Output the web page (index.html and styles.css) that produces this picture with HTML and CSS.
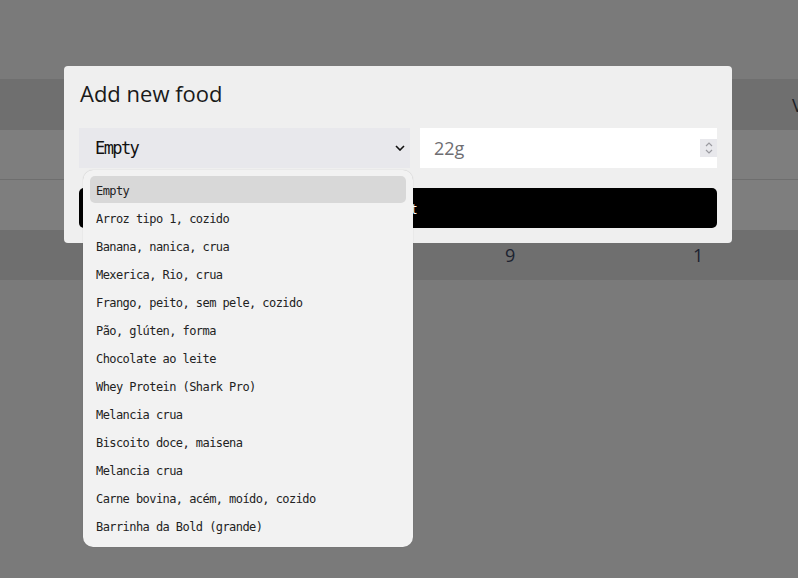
FILE: index.html
```html
<!DOCTYPE html>
<html>
<head>
<meta charset="utf-8">
<link rel="stylesheet" href="styles.css">
</head>
<body>
<div class="page">
  <div class="top"></div>
  <div class="row head"><span class="cell-v">V</span></div>
  <div class="row light line"></div>
  <div class="row light"></div>
  <div class="row dark"><span class="n9">9</span><span class="n1">1</span></div>
</div>

<div class="modal">
  <h2 class="title">Add new food</h2>
  <div class="fields">
    <div class="select">
      <span class="sel-text">Empty</span>
      <svg class="chev" width="10" height="6" viewBox="0 0 10 6"><path d="M1 1 L5 5 L9 1" fill="none" stroke="#111" stroke-width="1.6"/></svg>
    </div>
    <div class="input">
      <span class="in-text">22g</span>
      <span class="spin">
        <svg width="10" height="16" viewBox="0 0 10 16"><path d="M2 6 L5 3 L8 6" fill="none" stroke="#9a9aa0" stroke-width="1.2"/><path d="M2 10 L5 13 L8 10" fill="none" stroke="#9a9aa0" stroke-width="1.2"/></svg>
      </span>
    </div>
  </div>
  <div class="button">Submit</div>
</div>

<div class="dropdown">
  <div class="opt sel">Empty</div>
  <div class="opt">Arroz tipo 1, cozido</div>
  <div class="opt">Banana, nanica, crua</div>
  <div class="opt">Mexerica, Rio, crua</div>
  <div class="opt">Frango, peito, sem pele, cozido</div>
  <div class="opt">Pão, glúten, forma</div>
  <div class="opt">Chocolate ao leite</div>
  <div class="opt">Whey Protein (Shark Pro)</div>
  <div class="opt">Melancia crua</div>
  <div class="opt">Biscoito doce, maisena</div>
  <div class="opt">Melancia crua</div>
  <div class="opt">Carne bovina, acém, moído, cozido</div>
  <div class="opt">Barrinha da Bold (grande)</div>
</div>
</body>
</html>
```

FILE: styles.css
```css
* { box-sizing: border-box; }
html, body { margin: 0; padding: 0; }
body {
  width: 798px;
  height: 578px;
  overflow: hidden;
  background: #7a7a7a;
  font-family: "Open Sans", "Noto Sans", sans-serif;
  position: relative;
}
.page { display: flex; flex-direction: column; }
.top { height: 79px; background: #7a7a7a; }
.row { height: 50px; position: relative; display: flex; align-items: center; }
.head { height: 51px; background: #6f6f6f; }
.light { background: #7e7e7e; }
.line { border-bottom: 1px solid #6e6e6e; }
.dark { background: #6f6f6f; }
.cell-v { position: absolute; left: 792px; font-size: 18px; color: #1c1f26; }
.n9, .n1 { position: absolute; font-size: 18px; color: #1c2230; }
.n9 { left: 505px; }
.n1 { left: 693px; }

.modal {
  position: absolute;
  left: 64px;
  top: 66px;
  width: 668px;
  height: 177px;
  background: #efefef;
  border-radius: 4px;
  padding: 13px 15px 15px 15px;
}
.title {
  margin: 0 0 21px 1px;
  font-size: 22px;
  font-weight: 400;
  line-height: 28px;
  color: #1a1a1a;
}
.fields {
  display: grid;
  grid-template-columns: 331px 1fr;
  gap: 10px;
}
.select {
  height: 40px;
  background: #e8e8ec;
  display: flex;
  align-items: center;
  justify-content: space-between;
  padding: 0 4px 0 16px;
}
.sel-text {
  font-family: "DejaVu Sans Mono", monospace;
  font-size: 17px;
  letter-spacing: -1.6px;
  color: #111;
}
.chev { margin-right: 1px; }
.input {
  height: 40px;
  background: #fff;
  display: flex;
  align-items: center;
  justify-content: space-between;
  padding: 0 0 0 14px;
}
.in-text { font-size: 18px; color: #6e6e72; }
.spin {
  width: 17px;
  height: 18px;
  background: #e8e8ec;
  display: flex;
  align-items: center;
  justify-content: center;
}
.button {
  margin-top: 20px;
  height: 40px;
  background: #000;
  border-radius: 5px;
  color: #fff;
  font-size: 15px;
  padding-right: 12px;
  display: flex;
  align-items: center;
  justify-content: center;
}

.dropdown {
  position: absolute;
  left: 83px;
  top: 170px;
  width: 330px;
  height: 377px;
  background: #f2f2f2;
  border-radius: 10px;
  padding: 6px 7px;
  box-shadow: 0 0 1px rgba(0,0,0,0.25);
}
.opt {
  height: 28px;
  display: flex;
  align-items: center;
  padding-left: 6px;
  padding-top: 2px;
  font-family: "DejaVu Sans Mono", monospace;
  font-size: 12px;
  letter-spacing: -0.57px;
  color: #222;
  border-radius: 5px;
}
.opt.sel { background: #d8d8d8; height: 27px; margin-bottom: 1px; }
```
